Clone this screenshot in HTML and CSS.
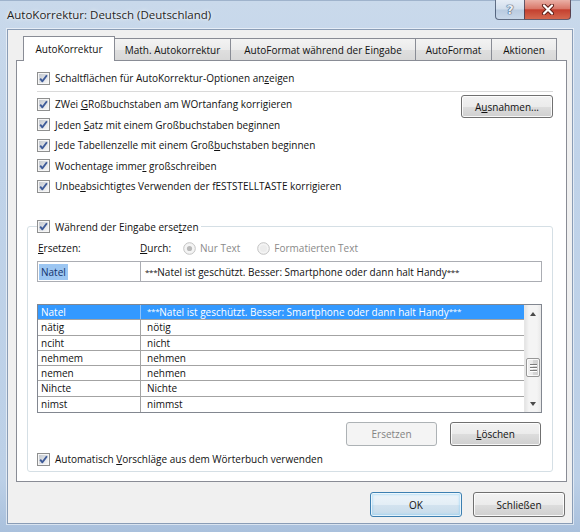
FILE: index.html
```html
<!DOCTYPE html>
<html lang="de">
<head>
<meta charset="utf-8">
<title>AutoKorrektur</title>
<link rel="stylesheet" href="styles.css">
</head>
<body>
<svg class="defs" width="0" height="0" aria-hidden="true">
  <defs>
    <linearGradient id="cbfill" x1="0" y1="0" x2="1" y2="1">
      <stop offset="0" stop-color="#c3c8cf"/>
      <stop offset="1" stop-color="#f7f7f7"/>
    </linearGradient>
    <symbol id="cb" viewBox="0 0 13 13">
      <rect x="0.5" y="0.5" width="12" height="12" fill="#f6f6f6" stroke="#8e8f8f"/>
      <rect x="2" y="2" width="9" height="9" fill="url(#cbfill)"/>
      <path d="M3.2 6.6 L5.4 9.3 L9.9 3.2" fill="none" stroke="#3d5a98" stroke-width="1.9" stroke-linejoin="round"/>
    </symbol>
    <symbol id="rb-on" viewBox="0 0 13 13">
      <circle cx="6.5" cy="6.5" r="5.8" fill="#f4f4f4" stroke="#c2c2c2"/>
      <circle cx="6.5" cy="6.5" r="2.6" fill="#b9b9b9"/>
    </symbol>
    <symbol id="rb-off" viewBox="0 0 13 13">
      <circle cx="6.5" cy="6.5" r="5.8" fill="#f4f4f4" stroke="#c2c2c2"/>
      <circle cx="6.5" cy="6.5" r="3.6" fill="#ececec"/>
    </symbol>
  </defs>
</svg>

<div class="window">
  <div class="titlebar">
    <span class="title">AutoKorrektur: Deutsch (Deutschland)</span>
    <div class="caption-buttons">
      <span class="cap-btn help">?</span>
      <span class="cap-btn close">
        <svg width="14" height="11" viewBox="0 0 14 11">
          <path d="M3 1.5 L11 9.5 M11 1.5 L3 9.5" stroke="#5a1b14" stroke-width="4" stroke-linecap="round"/>
          <path d="M3 1.5 L11 9.5 M11 1.5 L3 9.5" stroke="#ffffff" stroke-width="2.2" stroke-linecap="round"/>
        </svg>
      </span>
    </div>
  </div>

  <div class="client">
    <div class="tabs">
      <div class="tab tab-1 selected">AutoKorrektur</div>
      <div class="tab tab-2">Math. Autokorrektur</div>
      <div class="tab tab-3">AutoFormat während der Eingabe</div>
      <div class="tab tab-4">AutoFormat</div>
      <div class="tab tab-5">Aktionen</div>
    </div>

    <div class="panel">
      <div class="options">
        <div class="check-row"><svg class="cb"><use href="#cb"/></svg><span>Schaltflächen für AutoKorrektur-Optionen an<u>z</u>eigen</span></div>
        <div class="separator"></div>
        <div class="check-row"><svg class="cb"><use href="#cb"/></svg><span>ZWei <u>G</u>Roßbuchstaben am WOrtanfang korrigieren</span><button class="btn btn-exc">A<u>u</u>snahmen...</button></div>
        <div class="check-row"><svg class="cb"><use href="#cb"/></svg><span>Jeden <u>S</u>atz mit einem Großbuchstaben beginnen</span></div>
        <div class="check-row"><svg class="cb"><use href="#cb"/></svg><span>Jede Tabellenzelle mit einem Groß<u>b</u>uchstaben beginnen</span></div>
        <div class="check-row"><svg class="cb"><use href="#cb"/></svg><span>Wochentage imme<u>r</u> großschreiben</span></div>
        <div class="check-row"><svg class="cb"><use href="#cb"/></svg><span>Unbe<u>a</u>bsichtigtes Verwenden der fESTSTELLTASTE korrigieren</span></div>
      </div>

      <fieldset class="group">
        <legend class="group-title"><svg class="cb"><use href="#cb"/></svg><span>Während der Eingabe erse<u>t</u>zen</span></legend>

        <div class="labels">
          <span class="lbl-replace"><u>E</u>rsetzen:</span>
          <span class="lbl-with"><u>D</u>urch:</span>
          <span class="radio radio-first"><svg class="rb"><use href="#rb-on"/></svg><span>Nur Text</span></span>
          <span class="radio radio-second"><svg class="rb"><use href="#rb-off"/></svg><span>Formatierten Text</span></span>
        </div>

        <div class="inputs">
          <div class="textbox textbox-key"><span class="sel">Natel</span></div>
          <div class="textbox textbox-value"><span class="ast">***</span>Natel ist geschützt. Besser: Smartphone oder dann halt Handy<span class="ast">***</span></div>
        </div>

        <div class="list">
          <div class="list-rows">
            <div class="list-row selected"><span class="cell">Natel</span><span class="cell"><span class="ast">***</span>Natel ist geschützt. Besser: Smartphone oder dann halt Handy<span class="ast">***</span></span></div>
            <div class="list-row"><span class="cell">nätig</span><span class="cell">nötig</span></div>
            <div class="list-row"><span class="cell">nciht</span><span class="cell">nicht</span></div>
            <div class="list-row"><span class="cell">nehmem</span><span class="cell">nehmen</span></div>
            <div class="list-row"><span class="cell">nemen</span><span class="cell">nehmen</span></div>
            <div class="list-row"><span class="cell">Nihcte</span><span class="cell">Nichte</span></div>
            <div class="list-row"><span class="cell">nimst</span><span class="cell">nimmst</span></div>
          </div>
          <div class="scrollbar">
            <div class="sb-btn"><span class="arrow-up"></span></div>
            <div class="sb-track">
              <div class="sb-thumb"><span class="grip"></span><span class="grip"></span><span class="grip"></span></div>
            </div>
            <div class="sb-btn"><span class="arrow-down"></span></div>
          </div>
        </div>

        <div class="list-buttons">
          <button class="btn btn-list" disabled>Ersetzen</button>
          <button class="btn btn-list"><u>L</u>öschen</button>
        </div>

        <div class="check-row check-bottom"><svg class="cb"><use href="#cb"/></svg><span>Automatisch <u>V</u>orschläge aus dem Wörterbuch verwenden</span></div>
      </fieldset>
    </div>

    <div class="dialog-buttons">
      <button class="btn btn-dialog default">OK</button>
      <button class="btn btn-dialog">Schließen</button>
    </div>
  </div>
</div>
</body>
</html>
```
FILE: styles.css
```css
* { box-sizing: border-box; }

html, body {
  margin: 0;
  padding: 0;
}

body {
  width: 580px;
  height: 532px;
  overflow: hidden;
  font-family: "Open Sans", "Noto Sans", sans-serif;
  font-size: 10px;
  color: #111;
  background: #bfd2e8;
}

.defs {
  display: block;
  width: 0;
  height: 0;
  overflow: hidden;
}

u {
  text-decoration: underline;
  text-underline-offset: 1px;
}

.ast {
  font-size: 8px;
  line-height: 1;
  letter-spacing: -0.3px;
  vertical-align: 2px;
}

/* ---------- window frame ---------- */
.window {
  width: 580px;
  height: 532px;
  display: flex;
  flex-direction: column;
  padding: 0 7px 8px 7px;
  background: linear-gradient(180deg, #c9d9eb 0%, #c0d3e9 30%, #bcd0e7 90%, #a9c0dc 100%);
  border-top: 1px solid #9fb3cc;
}

.titlebar {
  height: 28px;
  flex: none;
  display: flex;
  align-items: flex-start;
}

.title {
  font-size: 11.5px;
  line-height: 16px;
  margin-top: 6px;
  color: #1e1e1e;
  text-shadow: 0 0 5px rgba(255, 255, 255, 0.9), 0 0 2px rgba(255, 255, 255, 0.8);
}

.caption-buttons {
  margin-left: auto;
  margin-right: 2px;
  margin-top: -1px;
  display: flex;
  height: 20px;
}

.cap-btn {
  height: 20px;
  display: flex;
  align-items: center;
  justify-content: center;
  border: 1px solid rgba(42, 58, 86, 0.7);
  border-top: none;
}

.help {
  width: 29px;
  border-right: none;
  border-radius: 0 0 0 4px;
  background: linear-gradient(180deg, #e6edf6 0%, #d2deec 48%, #b9cbe0 52%, #c9d8ea 100%);
  font-family: "DejaVu Sans", sans-serif;
  font-weight: bold;
  font-size: 13px;
  line-height: 1;
  color: #e9eff7;
  text-shadow: 0 0 1px #3b4f6e, 0 0 1px #3b4f6e, 0 0 1px #3b4f6e;
}

.close {
  width: 47px;
  border-radius: 0 0 4px 0;
  background: linear-gradient(180deg, #eab0a6 0%, #d9786a 45%, #c4402f 52%, #d4684f 100%);
}

/* ---------- client area ---------- */
.client {
  flex: 1;
  display: flex;
  flex-direction: column;
  background: #f0f0f0;
  border: 1px solid #8a9db6;
  box-shadow: 0 0 0 1px rgba(255, 255, 255, 0.55);
  padding: 6px 5px 6px 8px;
}

/* ---------- tabs ---------- */
.tabs {
  flex: none;
  height: 24px;
  display: flex;
  align-items: flex-end;
  margin-left: 7px;
}

.tab {
  height: 22px;
  margin-left: -1px;
  padding-top: 1px;
  display: flex;
  align-items: center;
  justify-content: center;
  border: 1px solid #898c95;
  border-bottom: none;
  background: linear-gradient(180deg, #f3f3f3 0%, #ebebeb 50%, #dfdfdf 51%, #d8d8d8 100%);
  white-space: nowrap;
}

.tab-1 { width: 92px; margin-left: 0; }
.tab-2 { width: 117px; }
.tab-3 { width: 186px; }
.tab-4 { width: 77px; }
.tab-5 { width: 66px; }

.tab.selected {
  height: 25px;
  margin-bottom: -1px;
  padding-top: 0;
  padding-bottom: 1px;
  background: #fff;
  position: relative;
  z-index: 1;
}

.panel {
  flex: 1;
  display: flex;
  flex-direction: column;
  background: #fff;
  border: 1px solid #898c95;
  padding-bottom: 9px;
}

/* ---------- checkbox rows ---------- */
.options {
  padding: 7px 13px 0 20px;
}

.check-row {
  display: flex;
  align-items: center;
  gap: 5px;
  height: 20.5px;
  white-space: nowrap;
}

.options .check-row:first-child {
  height: 20px;
}

.cb {
  width: 13px;
  height: 13px;
  flex: none;
}

.separator {
  height: 1px;
  background: #dadada;
  margin: 3px 0 2px;
}

/* ---------- buttons ---------- */
.btn {
  font-family: "Open Sans", "Noto Sans", sans-serif;
  font-size: 10px;
  color: #111;
  padding: 0;
  border: 1px solid #707070;
  border-radius: 3px;
  background: linear-gradient(180deg, #f2f2f2 0%, #ebebeb 50%, #dddddd 51%, #cfcfcf 100%);
  box-shadow: inset 0 0 0 1px rgba(255, 255, 255, 0.85);
}

.btn:disabled {
  color: #838383;
  border-color: #adb2b5;
  background: #f4f4f4;
  box-shadow: none;
}

.btn-exc {
  margin-left: auto;
  align-self: flex-start;
  margin-top: 1px;
  width: 92px;
  height: 23px;
}

.btn-list {
  width: 91px;
  height: 24px;
}

.btn-dialog {
  width: 92px;
  height: 25px;
}

.btn.default {
  border-color: #3c7fb1;
  box-shadow: inset 0 0 0 1px rgba(255, 255, 255, 0.7), inset 0 0 2px 2px rgba(130, 205, 245, 0.45);
  background: linear-gradient(180deg, #eef5fa 0%, #e3eef6 50%, #d3e3ef 51%, #c6dbea 100%);
}

/* ---------- group box ---------- */
.group {
  margin: 22.5px 13px 0 10px;
  padding: 0 10px 3px 9px;
  border: 1px solid #d5dfe5;
  border-radius: 3px;
  min-width: 0;
}

.group-title {
  display: flex;
  align-items: center;
  gap: 5px;
  height: 15px;
  padding: 0 2px 0 0;
  white-space: nowrap;
}

.labels {
  display: flex;
  align-items: center;
  height: 16px;
  margin-top: 6px;
  white-space: nowrap;
}

.lbl-replace {
  width: 103px;
  padding-left: 1px;
}

.radio {
  display: flex;
  align-items: center;
  gap: 4px;
  color: #8a8a8a;
}

.radio-first { margin-left: 12px; }
.radio-second { margin-left: 17px; }

.rb {
  width: 13px;
  height: 13px;
  flex: none;
}

.inputs {
  display: flex;
  height: 21px;
  margin-top: 5px;
}

.textbox {
  height: 21px;
  border: 1px solid #abadb3;
  background: #fff;
  display: flex;
  align-items: center;
  white-space: nowrap;
}

.textbox-key {
  width: 104px;
  padding-left: 1px;
}

.textbox-value {
  flex: 1;
  margin-left: -1px;
  padding-left: 4px;
}

.sel {
  background: #9cc6f2;
  color: #12316a;
  padding: 1px 2px;
}

/* ---------- list ---------- */
.list {
  height: 109px;
  margin-top: 22px;
  display: flex;
  border: 1px solid #828790;
  background: #fff;
}

.list-rows {
  flex: 1;
  display: flex;
  flex-direction: column;
  min-width: 0;
}

.list-row {
  display: grid;
  grid-template-columns: 103px 1fr;
  height: 15.3px;
  border-bottom: 1px solid #a3a3a3;
  line-height: 14px;
}

.list-row:last-child {
  border-bottom: none;
}

.cell {
  padding-left: 3px;
  white-space: nowrap;
}

.cell:first-child {
  border-right: 1px solid #a3a3a3;
}

.cell + .cell {
  padding-left: 6px;
}

.list-row.selected {
  background: #3399ff;
  color: #fff;
}

.list-row.selected .cell:first-child {
  border-right-color: #8fc4fb;
}

.scrollbar {
  width: 17px;
  flex: none;
  display: flex;
  flex-direction: column;
  background: linear-gradient(90deg, #e4e4e4 0%, #f4f4f4 25%, #f4f4f4 75%, #e8e8e8 100%);
  border-left: 1px solid #e6e6e6;
}

.sb-btn {
  height: 17px;
  flex: none;
  display: flex;
  align-items: center;
  justify-content: center;
}

.arrow-up,
.arrow-down {
  width: 0;
  height: 0;
  border-left: 3.5px solid transparent;
  border-right: 3.5px solid transparent;
}

.arrow-up { border-bottom: 4px solid #4a4a4a; }
.arrow-down { border-top: 4px solid #4a4a4a; }

.sb-track {
  flex: 1;
  padding: 0 1px;
}

.sb-thumb {
  margin-top: 36px;
  height: 19px;
  border: 1px solid #979797;
  border-radius: 2px;
  background: linear-gradient(90deg, #f3f3f3 0%, #e8e8e8 50%, #d6d6d6 51%, #d0d0d0 100%);
  box-shadow: inset 0 0 0 1px rgba(255, 255, 255, 0.8);
  display: flex;
  flex-direction: column;
  justify-content: center;
  align-items: center;
  gap: 2px;
}

.grip {
  width: 7px;
  height: 1px;
  background: #7b7b7b;
  box-shadow: 0 1px 0 #fff;
}

/* ---------- lower controls ---------- */
.list-buttons {
  display: flex;
  justify-content: flex-end;
  gap: 13px;
  margin-top: 9px;
  padding-right: 1px;
}

.check-bottom {
  height: 18px;
  margin-top: 4px;
}

.dialog-buttons {
  flex: none;
  display: flex;
  justify-content: flex-end;
  gap: 11px;
  margin-top: 10px;
  padding-right: 2px;
}
```
